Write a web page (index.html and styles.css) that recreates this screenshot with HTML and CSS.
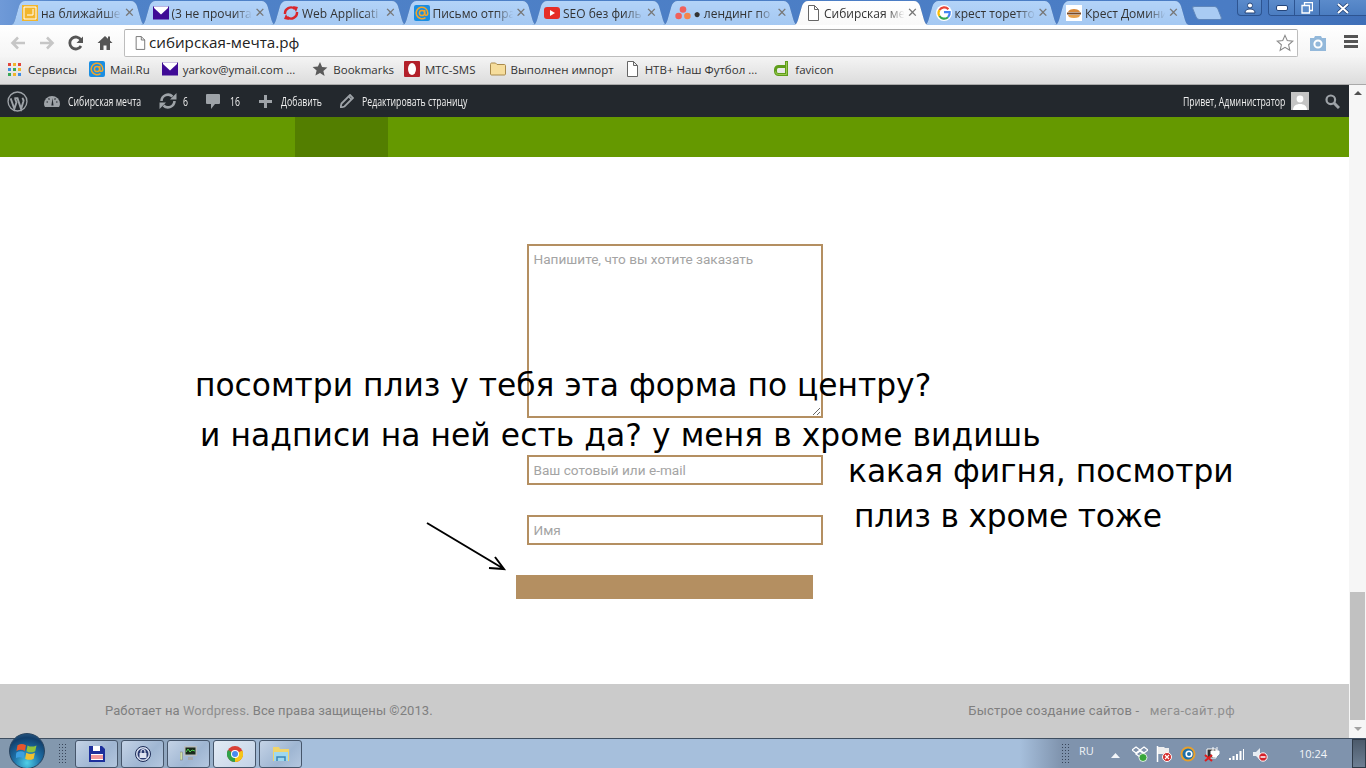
FILE: index.html
```html
<!DOCTYPE html>
<html lang="ru">
  <head>
    <meta charset="UTF-8" />
    <title>Сибирская мечта</title>
    <link rel="stylesheet" href="styles.css">
  </head>
  <body>
    <svg class="defs" width="0" height="0">
      <symbol id="i-mail" viewBox="0 0 16 16"><rect x="0" y="0" width="16" height="16" rx="2" fill="#1a8ee2"/><path d="M11.500 12.600A5.800 5.800 0 1 1 13.800 8c0 3-3.100 3-3.100.5V5" fill="none" stroke="#f4a62a" stroke-width="1.500"/><circle cx="8" cy="8" r="2.600" fill="none" stroke="#f4a62a" stroke-width="1.500"/></symbol>
      <symbol id="i-env" viewBox="0 0 16 13"><rect width="16" height="13" fill="#3f0a96"/><path d="M1 1.500 8 8l7-6.500V0H1z" fill="#fff"/></symbol>
      <symbol id="i-file" viewBox="0 0 14 16"><path d="M2.500.500h6l4 4v11h-10z M8.500.500v4h4" fill="#fff" stroke="#666" stroke-width="1"/></symbol>
    </svg>

    <header class="tabstrip">
      <div class="tabs">
        <div class="tab"><div class="tab-shape">
          <svg class="fav" viewBox="0 0 16 16"><rect width="16" height="16" fill="#f2b62c"/><path d="M2 2h12v12H2z M11 4v6H5" fill="none" stroke="#fff" stroke-width="1"/></svg>
          <span class="tab-title">на ближайше</span><span class="tab-x">✕</span>
        </div></div>
        <div class="tab"><div class="tab-shape">
          <svg class="fav"><use href="#i-env"/></svg>
          <span class="tab-title">(3 не прочита</span><span class="tab-x">✕</span>
        </div></div>
        <div class="tab"><div class="tab-shape">
          <svg class="fav" viewBox="0 0 16 16"><path d="M2 9a6 6 0 0 1 10-5M14 7a6 6 0 0 1-10 5" fill="none" stroke="#d9262c" stroke-width="2.400"/><path d="M10 1l5 1-2 5zM6 15l-5-1 2-5z" fill="#d9262c"/></svg>
          <span class="tab-title">Web Applicati</span><span class="tab-x">✕</span>
        </div></div>
        <div class="tab"><div class="tab-shape">
          <svg class="fav"><use href="#i-mail"/></svg>
          <span class="tab-title">Письмо отпра</span><span class="tab-x">✕</span>
        </div></div>
        <div class="tab"><div class="tab-shape">
          <svg class="fav" viewBox="0 0 16 16"><rect y="2" width="16" height="12" rx="3" fill="#e52d27"/><path d="M6 5l5 3-5 3z" fill="#fff"/></svg>
          <span class="tab-title">SEO без филь</span><span class="tab-x">✕</span>
        </div></div>
        <div class="tab"><div class="tab-shape">
          <svg class="fav" viewBox="0 0 16 16"><circle cx="8" cy="4.500" r="3.300" fill="#f0605c"/><circle cx="3.600" cy="11" r="3.300" fill="#f0605c"/><circle cx="12.400" cy="11" r="3.300" fill="#f4854a"/></svg>
          <span class="tab-title">● лендинг по</span><span class="tab-x">✕</span>
        </div></div>
        <div class="tab tab-active"><div class="tab-shape">
          <svg class="fav"><use href="#i-file"/></svg>
          <span class="tab-title">Сибирская ме</span><span class="tab-x">✕</span>
        </div></div>
        <div class="tab"><div class="tab-shape">
          <svg class="fav" viewBox="0 0 16 16"><circle cx="8" cy="8" r="8" fill="#fff"/><path d="M12.400 4.200A5.700 5.700 0 0 0 3.400 5" fill="none" stroke="#e94335" stroke-width="2.200"/><path d="M3.400 5a5.700 5.700 0 0 0 0 6" fill="none" stroke="#fbbc05" stroke-width="2.200"/><path d="M3.400 11a5.700 5.700 0 0 0 8.600 1.200" fill="none" stroke="#34a853" stroke-width="2.200"/><path d="M12 12.200A5.700 5.700 0 0 0 13.700 7.200H8" fill="none" stroke="#4285f4" stroke-width="2.200"/></svg>
          <span class="tab-title">крест торетто</span><span class="tab-x">✕</span>
        </div></div>
        <div class="tab"><div class="tab-shape">
          <svg class="fav" viewBox="0 0 16 16"><rect width="16" height="16" fill="#fff"/><path d="M2 7c1-4 11-4 12 0z" fill="#d98a3a"/><rect x="1" y="7.500" width="14" height="2" fill="#7a4a26"/><path d="M2 10h12c0 2-2 3-6 3s-6-1-6-3z" fill="#e6a04c"/></svg>
          <span class="tab-title">Крест Домини</span><span class="tab-x">✕</span>
        </div></div>
        <div class="tab-new"></div>
      </div>
      <div class="win-btns">
        <div class="win-btn win-user">
          <svg width="12" height="12" viewBox="0 0 12 12"><circle cx="6" cy="3.500" r="2.500" fill="#fff" stroke="#24457a"/><path d="M1 11c0-3 2-4 5-4s5 1 5 4z" fill="#fff" stroke="#24457a"/></svg>
        </div>
        <div class="win-group">
          <div class="win-btn win-min"><svg width="12" height="6" viewBox="0 0 12 6"><rect x=".5" y=".5" width="11" height="5" rx="1.500" fill="#fff" stroke="#24457a"/></svg></div>
          <div class="win-btn win-max"><svg width="12" height="12" viewBox="0 0 12 12"><path d="M3.500.500h8v8h-8z" fill="none" stroke="#fff" stroke-width="1.300"/><path d="M1 3.500h7.500V11H1z" fill="#5b8ccb" stroke="#fff" stroke-width="1.300"/></svg></div>
          <div class="win-btn win-close"><svg width="14" height="11" viewBox="0 0 14 11"><path d="M2 1l10 9M12 1L2 10" stroke="#24457a" stroke-width="3.600"/><path d="M2 1l10 9M12 1L2 10" stroke="#fff" stroke-width="2"/></svg></div>
        </div>
      </div>
    </header>

    <div class="toolbar">
      <svg class="nav-ico" viewBox="0 0 16 14"><path d="M15 7H3M8 1.500 2.500 7 8 12.500" fill="none" stroke="#c6c6c6" stroke-width="2.600"/></svg>
      <svg class="nav-ico" viewBox="0 0 16 14"><path d="M1 7h12M8 1.500 13.500 7 8 12.500" fill="none" stroke="#c6c6c6" stroke-width="2.600"/></svg>
      <svg class="nav-ico" viewBox="0 0 16 16"><path d="M13 11a6 6 0 1 1 0-6" fill="none" stroke="#555" stroke-width="2.800"/><path d="M15 1.500V8H8.500z" fill="#555"/></svg>
      <svg class="nav-ico" viewBox="0 0 16 16"><path d="M8 1 .500 8H3v7h3.500v-4.500h3V15H13V8h2.500L13 5.600V1.500h-2v2.200z" fill="#555"/></svg>
      <div class="omnibox">
        <svg class="omni-file"><use href="#i-file"/></svg>
        <span class="omni-url">сибирская-мечта.рф</span>
        <svg class="omni-star" viewBox="0 0 20 20"><path d="M10 1.500l2.500 5.800 6.200.6-4.700 4.100 1.400 6.100-5.400-3.200-5.400 3.200 1.400-6.100L1.300 7.900l6.200-.6z" fill="#fff" stroke="#8a8a8a" stroke-width="1.200"/></svg>
      </div>
      <svg class="camera" viewBox="0 0 18 16"><path d="M1 3h4l1-2h6l1 2h4v13H1z" fill="#93b8da"/><circle cx="9" cy="9" r="3.600" fill="none" stroke="#fff" stroke-width="2"/></svg>
      <div class="menu-ico"><i></i><i></i><i></i></div>
    </div>

    <nav class="bookmarks">
      <a class="bm"><svg class="bm-ico-apps" viewBox="0 0 13 13"><rect width="3" height="3" fill="#e2453c"/><rect x="5" width="3" height="3" fill="#f2b52c"/><rect x="10" width="3" height="3" fill="#e2453c"/><rect y="5" width="3" height="3" fill="#3f8de4"/><rect x="5" y="5" width="3" height="3" fill="#3aa757"/><rect x="10" y="5" width="3" height="3" fill="#f2b52c"/><rect y="10" width="3" height="3" fill="#3aa757"/><rect x="5" y="10" width="3" height="3" fill="#f2b52c"/><rect x="10" y="10" width="3" height="3" fill="#3f8de4"/></svg>Сервисы</a>
      <a class="bm"><svg class="fav"><use href="#i-mail"/></svg>Mail.Ru</a>
      <a class="bm bm-yarkov"><svg class="fav"><use href="#i-env"/></svg>yarkov@ymail.com ...</a>
      <a class="bm bm-marks"><svg class="fav" viewBox="0 0 16 16"><path d="M8 1l2.100 4.900 5.300.5-4 3.500 1.200 5.200L8 12l-4.600 2.600 1.200-5.200-4-3.500 5.300-.5z" fill="#5a5a5a"/></svg>Bookmarks</a>
      <a class="bm bm-mts"><svg class="fav" viewBox="0 0 16 16"><rect width="16" height="16" rx="1" fill="#b3202a"/><ellipse cx="8" cy="8" rx="4" ry="6" fill="#fff"/></svg>MTC-SMS</a>
      <a class="bm bm-import"><svg class="fav" viewBox="0 0 16 16"><path d="M.500 3.500c0-1 .5-1.500 1-1.500h4l1.500 1.500h7.500c.5 0 1 .5 1 1v8.500c0 .5-.5 1-1 1h-13c-.500 0-1-.5-1-1z" fill="#f6dd9c" stroke="#a98a4c"/></svg>Выполнен импорт</a>
      <a class="bm bm-ntv"><svg class="fav"><use href="#i-file"/></svg>НТВ+ Наш Футбол ...</a>
      <a class="bm"><svg class="fav" viewBox="0 0 16 16"><path d="M12.500 0v13.500H4.500A3 3 0 0 1 1.500 10.500V8.500A3 3 0 0 1 4.500 5.500H12.500" fill="none" stroke="#5f9e1c" stroke-width="3"/><path d="M12.500 1v12.500H4.500A3 3 0 0 1 1.500 10.500" fill="none" stroke="#a9d45c" stroke-width=".8"/></svg>favicon</a>
    </nav>

    <div class="viewport">
      <main class="page">
        <div class="adminbar">
          <div class="ab-left">
            <svg class="ab-wp" viewBox="0 0 20 20"><circle cx="10" cy="10" r="9" fill="none" stroke="#9ea3a8" stroke-width="1.300"/><path d="M3.500 7l3.500 10 2-6-1.400-4M7 6.800h3.800M10 7l3.400 10 2.200-7c.4-1.600-.3-2.600-1-3.500" fill="none" stroke="#9ea3a8" stroke-width="1.800"/></svg>
            <svg class="ab-dash" viewBox="0 0 16 14"><path d="M0 11a8 8 0 1 1 16 0c0 1-.3 2-1 3H1c-.7-1-1-2-1-3z" fill="#9ea3a8"/><path d="M7.400 12.500 8.500 5l1 7.500z" fill="#23282d"/><path d="M2.500 9h1.500M12 9h1.500M4.500 5.500l1 1M11.500 5.500l-1 1" stroke="#23282d" stroke-width="1.200"/></svg>
            <span class="ab-label lbl-site">Сибирская мечта</span>
            <svg class="ab-updates" viewBox="0 0 18 16"><path d="M2.500 8a6.500 6.500 0 0 1 11-4.500M15.500 8a6.500 6.500 0 0 1-11 4.500" fill="none" stroke="#9ea3a8" stroke-width="2.600"/><path d="M11 6.500h6.500V0zM7 9.500H.5V16z" fill="#9ea3a8"/></svg>
            <span class="ab-label lbl-upd">6</span>
            <svg class="ab-comment" viewBox="0 0 14 15"><path d="M1 0h12a1 1 0 0 1 1 1v8a1 1 0 0 1-1 1H9l-4 5v-5H1a1 1 0 0 1-1-1V1a1 1 0 0 1 1-1z" fill="#9ea3a8"/></svg>
            <span class="ab-label lbl-com">16</span>
            <svg class="ab-plus" viewBox="0 0 13 13"><path d="M5 0h3v5h5v3H8v5H5V8H0V5h5z" fill="#9ea3a8"/></svg>
            <span class="ab-label lbl-add">Добавить</span>
            <svg class="ab-pencil" viewBox="0 0 14 14"><path d="M10 1l3 3-8.500 8.500L.5 13.500l1-4z" fill="none" stroke="#9ea3a8" stroke-width="1.800"/><path d="M8.500 2.500l3 3" stroke="#9ea3a8" stroke-width="1.500"/></svg>
            <span class="ab-label lbl-edit">Редактировать страницу</span>
          </div>
          <div class="ab-right">
            <span class="ab-label lbl-hello">Привет, Администратор</span>
            <div class="ab-avatar"><svg width="14" height="16" viewBox="0 0 14 16"><circle cx="7" cy="5" r="3.400" fill="#fff"/><path d="M0 16c0-4 3-6 7-6s7 2 7 6z" fill="#fff"/></svg></div>
            <svg class="ab-search" viewBox="0 0 15 15"><circle cx="5.800" cy="5.800" r="4.300" fill="none" stroke="#9ea3a8" stroke-width="2.200"/><path d="M9 9l5 5" stroke="#9ea3a8" stroke-width="3"/></svg>
          </div>
        </div>

        <div class="greenbar"><div class="greenbar-active"></div></div>

        <section class="content">
          <form class="order-form">
            <textarea class="field field-text" placeholder="Напишите, что вы хотите заказать"></textarea>
            <input class="field field-contact" type="text" placeholder="Ваш сотовый или e-mail" />
            <input class="field field-name" type="text" placeholder="Имя" />
            <button class="send" type="button"></button>
          </form>
        </section>

        <footer class="site-footer">
          <span>Работает на <a class="flink">Wordpress</a>. Все права защищены ©2013.</span>
          <span class="footer-credit">Быстрое создание сайтов - <a class="flink flink-site">мега-сайт.рф</a></span>
        </footer>
      </main>

      <aside class="scrollbar">
        <div class="sb-arrow sb-up"></div>
        <div class="sb-thumb"></div>
        <div class="sb-arrow sb-down"></div>
      </aside>
    </div>

    <footer class="taskbar">
      <div class="tb-left">
        <div class="tb-grip"></div>
        <div class="tb-btn">
          <svg width="16" height="16" viewBox="0 0 16 16"><path d="M0 0h13l3 3v13H0z" fill="#1c2f9c"/><rect x="4" y="0" width="7" height="5" fill="#fff"/><rect x="2" y="8" width="12" height="6" fill="#fff"/><path d="M2 10h12M2 12h12" stroke="#e2333a" stroke-width="1"/></svg>
        </div>
        <div class="tb-btn">
          <svg width="16" height="16" viewBox="0 0 16 16"><circle cx="8" cy="8" r="7.500" fill="#d7dff0" stroke="#1b2a55"/><circle cx="8" cy="8" r="5.500" fill="#2a3a70"/><rect x="4.500" y="7" width="7" height="5" fill="#dfe4f2"/><path d="M6 7V5.500a2 2 0 0 1 4 0V7" fill="none" stroke="#dfe4f2" stroke-width="1.200"/></svg>
        </div>
        <div class="tb-btn">
          <svg width="17" height="15" viewBox="0 0 17 15"><rect x="0" y="6" width="2.500" height="8" fill="#cfe1a8" stroke="#777" stroke-width=".5"/><rect x="4" y="0" width="13" height="10" fill="#b9bdc0"/><rect x="5.500" y="1.500" width="10" height="7" fill="#1a2a1a"/><path d="M6 6l2-3 2 3 2-2 3 1" fill="none" stroke="#4ed04e"/><rect x="8" y="11" width="5" height="3" fill="#aaa"/></svg>
        </div>
        <div class="tb-btn tb-btn-on">
          <svg width="16" height="16" viewBox="0 0 16 16"><circle cx="8" cy="8" r="8" fill="#d93f36"/><path d="M8 8 15.300 4.500A8 8 0 0 1 8 16z" fill="#f5c518"/><path d="M8 8 8 16A8 8 0 0 1 1 4z" fill="#2fa24a"/><circle cx="8" cy="8" r="4" fill="#fff"/><circle cx="8" cy="8" r="3" fill="#4a8bf0"/></svg>
        </div>
        <div class="tb-btn">
          <svg width="16" height="15" viewBox="0 0 16 15"><path d="M0 1h6l1 2h9v12H0z" fill="#f0d46a"/><path d="M1 6h14v9H1z" fill="#9fd8ee"/><path d="M4 15v-4h8v4" fill="none" stroke="#3b86b8" stroke-width="1.500"/></svg>
        </div>
      </div>
      <div class="tray">
        <div class="tb-grip tray-grip"></div>
        <span class="tray-lang">RU</span>
        <svg class="tray-up" width="9" height="5" viewBox="0 0 9 5"><path d="M0 5l4.500-5L9 5z" fill="#f2f5f9"/></svg>
        <svg class="tray-ico" viewBox="0 0 16 16"><path d="M4 1l4 3-4 3-4-3zM12 1l4 3-4 3-4-3zM4 8l4-3 4 3-4 3z" fill="none" stroke="#fff" stroke-width="1.300"/><circle cx="11" cy="11.500" r="4" fill="#39a639" stroke="#fff" stroke-width=".8"/></svg>
        <svg class="tray-ico" viewBox="0 0 16 16"><path d="M1.500 0v16" stroke="#fff" stroke-width="1.500"/><path d="M2 1h6l1 1h4v6H2z" fill="#eee"/><circle cx="11" cy="11" r="4.500" fill="#d52b2b" stroke="#fff"/><path d="M9 9l4 4M13 9l-4 4" stroke="#fff" stroke-width="1.200"/></svg>
        <svg class="tray-ico" viewBox="0 0 16 16"><circle cx="8" cy="8" r="6.500" fill="#1d6fa8" stroke="#e8a02c" stroke-width="2"/><circle cx="9" cy="8" r="2.800" fill="none" stroke="#fff" stroke-width="1.600"/></svg>
        <svg class="tray-ico" viewBox="0 0 16 16"><path d="M3 3h9v9H3z" fill="#333" stroke="#fff"/><path d="M9 1v4M13 1v4M7 5h8v3l-3 3H9L7 8z" fill="#fff" stroke="#fff"/><path d="M1 9l7 6M8 9l-7 6" stroke="#e01c1c" stroke-width="2"/></svg>
        <svg class="tray-ico" viewBox="0 0 16 16"><path d="M1 12h2v2H1zM4.500 10h2v4h-2zM8 8h2v6H8zM11.500 5h2v9h-2z M15 3h1v11h-1z" fill="#fff"/></svg>
        <svg class="tray-ico" viewBox="0 0 16 16"><path d="M1 6h3l4-4v12l-4-4H1z" fill="#e8edf3"/><circle cx="11" cy="11" r="4.200" fill="#d4202a" stroke="#fff"/><path d="M8.500 11h5" stroke="#fff" stroke-width="1.500"/></svg>
        <span class="tray-clock">10:24</span>
        <div class="show-desktop"></div>
      </div>
    </footer>

    <!-- start orb sticks out over the page, like on the real taskbar -->
    <div class="start-orb">
      <svg width="22" height="19" viewBox="0 0 20 18"><path d="M1 3c3-1.500 5-1.500 8 0l-1 5.500c-3-1.500-5-1.500-8 0z" fill="#e8562c"/><path d="M10.500 3.200c3 1.500 5 1.500 8.500 0l-1.200 5.500c-3 1.500-5.300 1.500-8.300 0z" fill="#8fc23c"/><path d="M0 10c3-1.500 5-1.500 7.800 0l-1 5.500c-3-1.500-5-1.500-8 0z" fill="#3d9fe0"/><path d="M9.300 10.300c3 1.500 5.300 1.500 8.200 0l-1.200 5.500c-3 1.500-5 1.500-8 0z" fill="#f3c02f"/></svg>
    </div>

    <!-- scribbled notes on top of the screenshot -->
    <p class="note note-1">посомтри плиз у тебя эта форма по центру?</p>
    <p class="note note-2">и надписи на ней есть да? у меня в хроме видишь</p>
    <p class="note note-3">какая фигня, посмотри</p>
    <p class="note note-4">плиз в хроме тоже</p>
    <svg class="note-arrow" width="90" height="60" viewBox="0 0 90 60"><path d="M2 1l77 46M70 35l9 12-15-1" fill="none" stroke="#000" stroke-width="2"/></svg>
  </body>
</html>
```

FILE: styles.css
```css
* {
  box-sizing: border-box;
}

html,
body {
  height: 100%;
  margin: 0;
  overflow: hidden;
}

body {
  display: flex;
  flex-direction: column;
  font-family: "Open Sans", Arial, sans-serif;
  background: #fff;
}

.defs {
  position: absolute;
}

/* browser tabs */
.tabstrip {
  flex: none;
  height: 25px;
  display: flex;
  justify-content: space-between;
  background: linear-gradient(90deg, #6f9ad8 0, #4f82c8 5%, #4a7cc4 90%, #3f6fb8 100%);
  position: relative;
  z-index: 2;
}

.tabs {
  display: flex;
  padding: 1px 0 0 10px;
}

.tab {
  width: 136px;
  height: 24px;
  margin-right: -5.5px;
  position: relative;
  filter: drop-shadow(0 0 .6px #45679a);
}

.tab-shape {
  width: 100%;
  height: 100%;
  display: flex;
  align-items: center;
  padding-left: 12px;
  background: linear-gradient(#b3d3f8, #a4c8f2);
  clip-path: path("M0 24C3 24 4 22 5 19L9 5C10 2 12 0 15 0L121 0C124 0 126 2 127 5L131 19C132 22 133 24 136 24Z");
}

.tab-active {
  z-index: 1;
}

.tab-active .tab-shape {
  background: linear-gradient(#fff, #f9f9f9);
}

.fav {
  width: 16px;
  height: 16px;
  flex: none;
}

.tab-title {
  width: 83px;
  margin-left: 3px;
  overflow: hidden;
  white-space: nowrap;
  font-size: 12px;
  color: #333;
  -webkit-mask-image: linear-gradient(90deg, #000 75%, transparent 97%);
  mask-image: linear-gradient(90deg, #000 75%, transparent 97%);
}

.tab-x {
  width: 10px;
  font-size: 13px;
  font-family: "DejaVu Sans", sans-serif;
  font-weight: bold;
  line-height: 10px;
  color: #777;
  text-align: center;
}

.tab-new {
  width: 26px;
  height: 14px;
  margin: 5px 0 0 9px;
  background: #a9cbf3;
  border: 1px solid #5f86bb;
  border-radius: 3px;
  transform: skewX(22deg);
}

.win-btns {
  display: flex;
  gap: 6px;
  height: 16px;
}

.win-btn {
  height: 16px;
  display: flex;
  align-items: center;
  justify-content: center;
  background: linear-gradient(#5b8bcb, #4a7cc0);
}

.win-user {
  width: 25px;
  border: 1px solid #2d5491;
  border-top: none;
  border-radius: 0 0 4px 4px;
}

.win-group {
  display: flex;
  border: 1px solid #2d5491;
  border-top: none;
  border-right: none;
  border-radius: 0 0 0 4px;
  overflow: hidden;
}

.win-min {
  width: 26px;
  border-right: 1px solid #2d5491;
}

.win-max {
  width: 25px;
  border-right: 1px solid #2d5491;
}

.win-close {
  width: 46px;
}

/* address bar */
.toolbar {
  flex: none;
  height: 32px;
  display: flex;
  align-items: center;
  padding-left: 10px;
  background: linear-gradient(#fff, #f5f5f5);
}

.nav-ico {
  width: 16px;
  height: 16px;
  flex: none;
  margin-right: 13px;
  margin-top: 3px;
}

.omnibox {
  width: 1174px;
  height: 28px;
  margin: 4px 0 0 -2px;
  display: flex;
  align-items: center;
  padding: 0 3px 0 9px;
  background: #fff;
  border: 1px solid #bdbdbd;
  border-top-color: #a8a8a8;
  border-radius: 2px;
}

.omni-file {
  width: 12px;
  height: 14px;
}

.omni-url {
  flex: 1;
  margin-left: 3px;
  padding-bottom: 2px;
  font-size: 15.200px;
  color: #222;
}

.omni-star {
  width: 18px;
  height: 18px;
}

.camera {
  width: 18px;
  height: 16px;
  margin: 3px 0 0 11px;
}

.menu-ico {
  margin: 3px 0 0 17px;
}

.menu-ico i {
  display: block;
  width: 14px;
  height: 3px;
  margin-bottom: 2px;
  background: #555;
}

/* bookmarks */
.bookmarks {
  flex: none;
  height: 28px;
  display: flex;
  align-items: center;
  padding: 0 0 3px 8px;
  background: linear-gradient(#f4f4f4, #dcdcdc);
  border-bottom: 1px solid #a9a9a9;
}

.bm {
  display: flex;
  align-items: center;
  gap: 5px;
  margin-right: 12px;
  font-size: 11.500px;
  color: #333;
  white-space: nowrap;
}

.bm-yarkov {
  margin-right: 17px;
}

.bm-marks {
  margin-right: 10px;
}

.bm-mts {
  margin-right: 14px;
}

.bm-import {
  margin-right: 10px;
}

.bm-ntv {
  margin-right: 17px;
}

.bm-ico-apps {
  width: 13px;
  height: 13px;
  margin-right: 2px;
}

/* page area */
.viewport {
  flex: 1;
  display: flex;
  min-height: 0;
}

.page {
  flex: 1;
  display: flex;
  flex-direction: column;
  min-width: 0;
}

.adminbar {
  flex: none;
  height: 32px;
  display: flex;
  justify-content: space-between;
  align-items: center;
  padding: 0 9px 0 7px;
  background: #23282d;
}

.ab-left,
.ab-right {
  display: flex;
  align-items: center;
}

/* no condensed font here, so squeeze the normal one */
.ab-label {
  display: block;
  font-size: 13px;
  color: #eee;
  white-space: nowrap;
  transform: scaleX(.67);
  transform-origin: 0 50%;
}

.ab-wp {
  width: 21px;
  height: 21px;
}

.ab-dash {
  width: 16px;
  height: 14px;
  margin: -2px 8px 0 16px;
}

.lbl-site {
  width: 74px;
}

.ab-updates {
  width: 18px;
  height: 16px;
  margin: 0 6px 0 17px;
}

.lbl-upd {
  width: 6px;
}

.ab-comment {
  width: 14px;
  height: 15px;
  margin: 0 10px 0 17px;
}

.lbl-com {
  width: 10px;
}

.ab-plus {
  width: 13px;
  height: 13px;
  margin: 0 9px 0 19px;
}

.lbl-add {
  width: 40px;
}

.ab-pencil {
  width: 14px;
  height: 14px;
  margin: 0 8px 0 19px;
}

.lbl-edit {
  width: 104px;
}

.lbl-hello {
  width: 102px;
}

.ab-avatar {
  width: 18px;
  height: 18px;
  margin: 0 16px 0 6px;
  display: flex;
  align-items: flex-end;
  justify-content: center;
  overflow: hidden;
  background: #c4c4c4;
}

.ab-search {
  width: 15px;
  height: 15px;
}

.greenbar {
  flex: none;
  height: 40px;
  padding-left: 295px;
  background: #659900;
}

.greenbar-active {
  width: 93px;
  height: 100%;
  background: #537e00;
}

.content {
  flex: 1;
  padding-top: 87px;
}

.order-form {
  width: 296px;
  margin: 0 auto;
  display: flex;
  flex-direction: column;
}

.field {
  display: block;
  width: 100%;
  padding: 0 5px 0 5px;
  border: 2px solid #b48f61;
  border-radius: 0;
  outline: none;
  background: #fff;
  font-family: Roboto, Arial, sans-serif;
  font-size: 13.600px;
  color: #333;
}

.field::placeholder {
  color: #a4a4a4;
  opacity: 1;
}

.field-text {
  height: 174px;
  padding-top: 5px;
  resize: vertical;
}

.field-contact {
  height: 30px;
  margin-top: 37px;
}

.field-name {
  height: 30px;
  margin-top: 30px;
}

.send {
  width: 297px;
  height: 24px;
  margin: 30px 0 0 -11px;
  padding: 0;
  border: none;
  background: #b48f61;
}

.site-footer {
  flex: none;
  height: 54px;
  display: flex;
  justify-content: space-between;
  align-items: center;
  padding: 0 114px 2px 105px;
  background: #cbcbcb;
  font-family: Roboto, Arial, sans-serif;
  font-size: 13px;
  letter-spacing: .08px;
  color: #7f7f7f;
}

.footer-credit {
  letter-spacing: .2px;
}

.flink {
  color: #8f8f8f;
}

.flink-site {
  margin-left: 7px;
  letter-spacing: .4px;
}

/* page scrollbar */
.scrollbar {
  flex: none;
  width: 17px;
  display: flex;
  flex-direction: column;
  align-items: center;
  background: #f6f6f6;
}

.sb-arrow {
  flex: none;
  width: 0;
  height: 0;
  border-left: 4px solid transparent;
  border-right: 4px solid transparent;
}

.sb-up {
  margin: 6px 0 0;
  border-bottom: 4px solid #505050;
}

.sb-thumb {
  width: 15px;
  height: 128px;
  margin-top: auto;
  background: #c1c1c1;
}

.sb-down {
  margin: 7px 0 7px;
  border-top: 4px solid #a3a3a3;
}

/* windows taskbar */
.taskbar {
  flex: none;
  height: 30px;
  display: flex;
  justify-content: space-between;
  background: linear-gradient(90deg, #8398ae 0, #8398ae 72px, #a6bfdc 300px, #a6bfdc 1020px, #7f93ad 1062px, #7f93ad 100%);
  border-top: 1px solid #3e4e60;
}

.tb-left {
  display: flex;
  align-items: center;
  gap: 3px;
  padding-left: 58px;
}

.tb-grip {
  width: 8px;
  height: 22px;
  margin-right: 6px;
  background-image: radial-gradient(#39465a 1px, transparent 1px);
  background-size: 3px 3px;
}

.tb-btn {
  width: 43px;
  height: 28px;
  display: flex;
  align-items: center;
  justify-content: center;
  border: 1px solid #46566b;
  border-radius: 3px;
  background: linear-gradient(135deg, #c4d3e6, #9fb6d2 60%, #b4c7df);
}

.tb-btn-on {
  background: linear-gradient(135deg, #e2eaf4, #c3d3e7);
}

.tray {
  display: flex;
  align-items: center;
  padding-right: 0;
}

.tray-grip {
  margin-right: 10px;
}

.tray-lang {
  width: 16px;
  margin: -7px 14px 0 0;
  font-family: "Open Sans", Arial, sans-serif;
  font-size: 11px;
  color: #f0f4f8;
}

.tray-up {
  margin: 3px 12px 0 2px;
}

.tray-ico {
  width: 16px;
  height: 16px;
  margin-right: 8px;
}

.tray-clock {
  margin-left: 23px;
  width: 53px;
  font-size: 11px;
  color: #f2f5f9;
}

.show-desktop {
  width: 14px;
  height: 29px;
  background: linear-gradient(#4c5a6b, #6d7f93);
  border: 1px solid #2f3b49;
}

/* things lying over the page */
.start-orb {
  position: absolute;
  left: 9px;
  top: 733px;
  width: 36px;
  height: 36px;
  display: flex;
  align-items: center;
  justify-content: center;
  border-radius: 50%;
  border: 1px solid #27435f;
  background: radial-gradient(circle at 50% 85%, #4fd0e8 0, #1d6fa6 40%, #123f6c 75%, #3a6a90 100%);
}

.note {
  position: absolute;
  margin: 0;
  font-family: "DejaVu Sans", sans-serif;
  font-size: 31.300px;
  line-height: 36px;
  color: #000;
  white-space: nowrap;
}

.note-1 {
  left: 195px;
  top: 367px;
}

.note-2 {
  left: 200px;
  top: 417px;
  letter-spacing: .08px;
}

.note-3 {
  left: 848px;
  top: 453px;
}

.note-4 {
  left: 854px;
  top: 498px;
  letter-spacing: -.18px;
}

.note-arrow {
  position: absolute;
  left: 425px;
  top: 522px;
}
```
